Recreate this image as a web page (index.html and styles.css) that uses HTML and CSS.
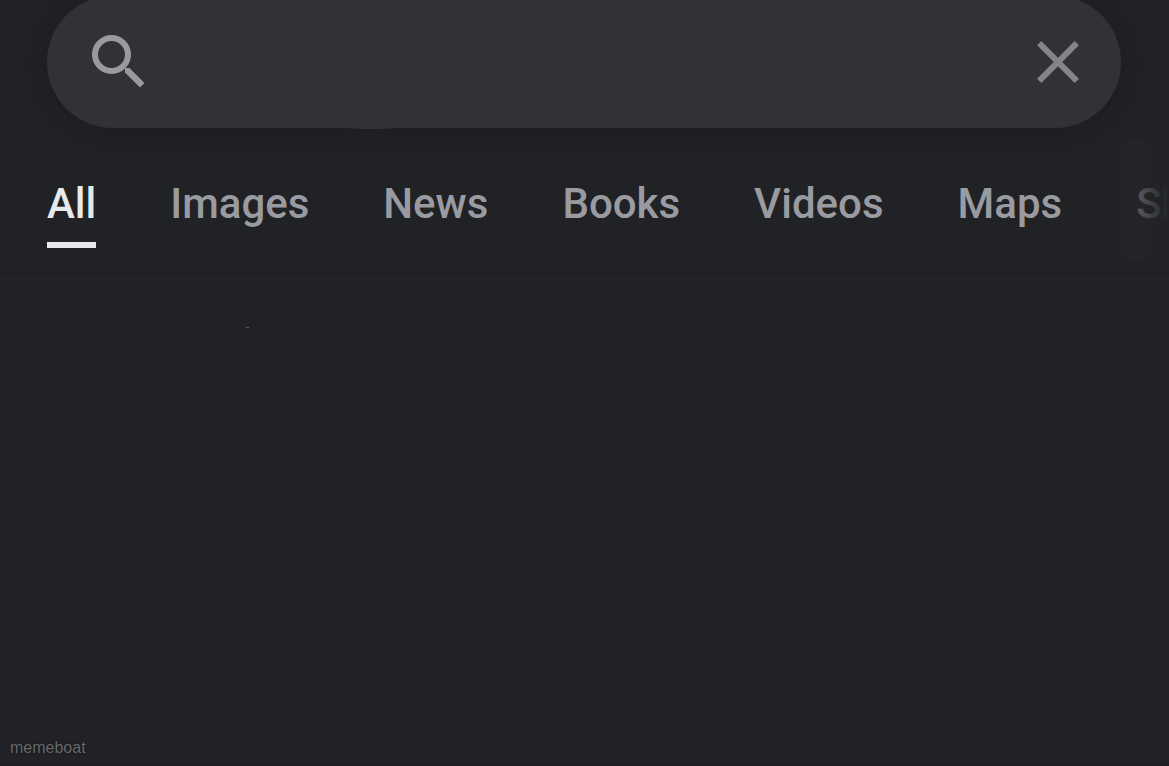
FILE: index.html
```html
<!DOCTYPE html>
<html lang="en">
<head>
<meta charset="utf-8">
<meta name="viewport" content="width=device-width, initial-scale=1">
<title>Search</title>
<link rel="stylesheet" href="styles.css">
</head>
<body>
<div class="page">
  <form class="search" role="search">
    <button class="icon-button" type="submit" aria-label="Search">
      <svg class="icon-search" viewBox="0 0 52 54" aria-hidden="true">
        <circle cx="19.500" cy="19.500" r="16.500" fill="none" stroke="currentColor" stroke-width="6"/>
        <path d="M33 33h4.500L52.500 48 48 52.500 33 37.500z" fill="currentColor"/>
      </svg>
    </button>
    <input class="search-input" type="text" aria-label="Search query">
    <button class="icon-button clear" type="reset" aria-label="Clear">
      <svg class="icon-clear" viewBox="0 0 42 42" aria-hidden="true">
        <path d="M2.200 2.200l37.600 37.600M39.800 2.200L2.200 39.800" fill="none" stroke="currentColor" stroke-width="6"/>
      </svg>
    </button>
  </form>
  <nav class="tabs" aria-label="Result types">
    <a class="tab active" href="#all" aria-current="page">All</a>
    <a class="tab" href="#images">Images</a>
    <a class="tab" href="#news">News</a>
    <a class="tab" href="#books">Books</a>
    <a class="tab" href="#videos">Videos</a>
    <a class="tab" href="#maps">Maps</a>
    <a class="tab faded" href="#shopping">Sh</a>
  </nav>
  <main class="results"><span class="speck"></span></main>
  <footer class="footer">memeboat</footer>
</div>
</body>
</html>
```
FILE: styles.css
```css
* { box-sizing: border-box; }

body {
  margin: 0;
  background: #212225;
  color: #9a9ba1;
  font-family: Roboto, "Liberation Sans", sans-serif;
}

.page {
  display: flex;
  flex-direction: column;
  min-height: 100vh;
  overflow: hidden;
}

.search {
  position: relative;
  display: flex;
  align-items: center;
  height: 132px;
  margin: -4px 48px 0 47px;
  padding: 0 42px 0 45px;
  border-radius: 66px;
  background: #313236;
  box-shadow: 0 2px 18px 2px #1e1d21;
}

.search::after {
  content: "";
  position: absolute;
  bottom: -1px;
  left: 288px;
  width: 72px;
  height: 6px;
  border-radius: 50%;
  background: #313236;
}

.icon-button {
  display: flex;
  padding: 0;
  border: 0;
  background: none;
  color: #999a9f;
}

.clear { color: #838589; }

.icon-search { width: 52px; height: 54px; }

.icon-clear { width: 42px; height: 42px; }

.search-input {
  flex: 1;
  min-width: 0;
  margin: 0 24px;
  border: 0;
  outline: 0;
  background: none;
  color: #e8e9ed;
  font: inherit;
  font-size: 42px;
}

.tabs {
  position: relative;
  display: flex;
  gap: 74px;
  height: 146px;
  padding: 48px 0 26px 47px;
  border-bottom: 2px solid #1f1e22;
  overflow: hidden;
}

.tabs::after {
  content: "";
  position: absolute;
  top: 12px;
  right: 0;
  width: 66px;
  height: 120px;
  background: linear-gradient(90deg, #27272b00, #27272b80 50%, #212225);
}

.tab {
  flex: none;
  height: 72px;
  color: inherit;
  font-size: 42px;
  font-weight: 500;
  line-height: 56px;
  text-decoration: none;
  white-space: nowrap;
}

.active {
  border-bottom: 6px solid #e8e9ed;
  color: #e8e9ed;
}

.faded { color: #919298; }

.results {
  flex: 1;
  padding: 53px 0 0 246px;
}

.speck {
  display: block;
  width: 3px;
  height: 1px;
  background: #5c5d60;
}

.footer {
  padding: 0 10px 6px;
  border-bottom: 2px solid #1f1e22;
  color: #67686b;
  font: 16px/20px "Liberation Sans", Arial, sans-serif;
  text-shadow: 0 0 2px #111214;
}
```
